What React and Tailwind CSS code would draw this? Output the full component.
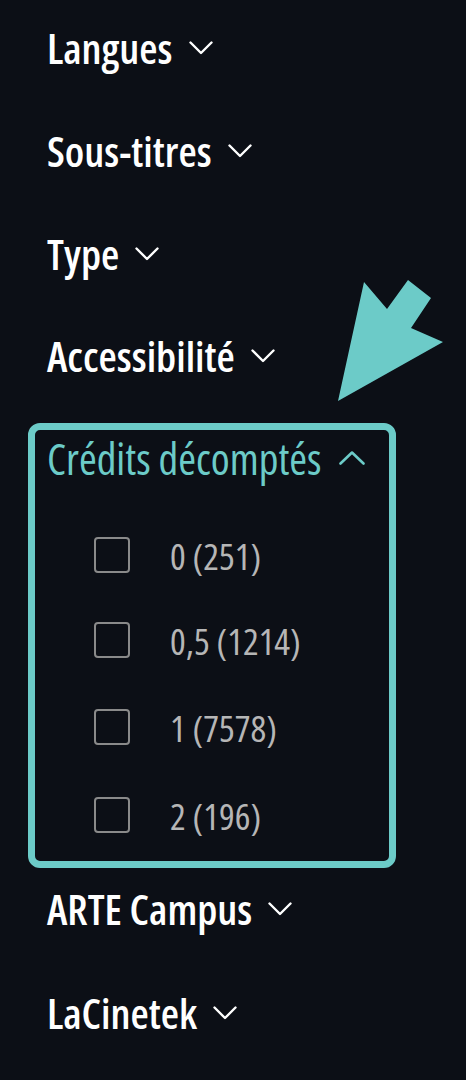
import React from "react";

const font = { fontFamily: '"Open Sans", "Noto Sans", sans-serif', fontStretch: "83%" };

function ChevronDown({ color = "#ffffff" }) {
  return (
    <svg width="24" height="14" viewBox="0 0 24 14" fill="none" className="shrink-0">
      <polyline points="1.5,1.5 12,12 22.5,1.5" stroke={color} strokeWidth="2.4" strokeLinecap="round" strokeLinejoin="round" />
    </svg>
  );
}

function ChevronUp({ color }) {
  return (
    <svg width="26" height="14" viewBox="0 0 26 14" fill="none" className="shrink-0">
      <polyline points="1.5,12.5 13,1.5 24.5,12.5" stroke={color} strokeWidth="2.6" strokeLinecap="round" strokeLinejoin="round" />
    </svg>
  );
}

function Heading({ label, className = "" }) {
  return (
    <div className={"flex h-[44px] items-center gap-[16px] pl-[47px] " + className}>
      <span className="whitespace-nowrap text-[42px] font-[550] leading-none text-white">{label}</span>
      <ChevronDown />
    </div>
  );
}

function Item({ label, className = "" }) {
  return (
    <div className={"flex h-[44px] items-center " + className}>
      <div className="ml-[59px] h-[36px] w-[36px] shrink-0 rounded-[4px] border-2 border-[#8a8a8a]" />
      <span className="ml-[40px] whitespace-nowrap text-[37px] font-medium leading-none text-[#b6b6b6]">{label}</span>
    </div>
  );
}

export default function App() {
  return (
    <div className="relative h-[1080px] w-[466px] overflow-hidden bg-[#0c0f16]" style={font}>
      <div className="flex flex-col pt-[26px]">
        <Heading label="Langues" />
        <Heading label="Sous-titres" className="mt-[59px]" />
        <Heading label="Type" className="mt-[59px]" />
        <Heading label="Accessibilité" className="mt-[58px]" />
        <div className="ml-[28px] mt-[45px] w-[368px] rounded-[12px] border-[7px] border-[#6ccbc8] pb-[24px] pt-[6px]">
          <div className="flex h-[44px] items-center gap-[17px] pl-[12px]">
            <span className="whitespace-nowrap text-[43px] font-medium leading-none text-[#6ccbc8]">Crédits décomptés</span>
            <ChevronUp color="#6ccbc8" />
          </div>
          <Item label="0 (251)" className="mt-[53px]" />
          <Item label="0,5 (1214)" className="mt-[41px]" />
          <Item label="1 (7578)" className="mt-[43px]" />
          <Item label="2 (196)" className="mt-[44px]" />
        </div>
        <Heading label="ARTE Campus" className="mt-[19px]" />
        <Heading label="LaCinetek" className="mt-[60px]" />
      </div>
      <svg className="absolute left-0 top-0" width="466" height="1080" viewBox="0 0 466 1080">
        <polygon points="364,282 387,309 408,280 431,298 411,328 443,342 338,401" fill="#6ccbc8" />
      </svg>
    </div>
  );
}
